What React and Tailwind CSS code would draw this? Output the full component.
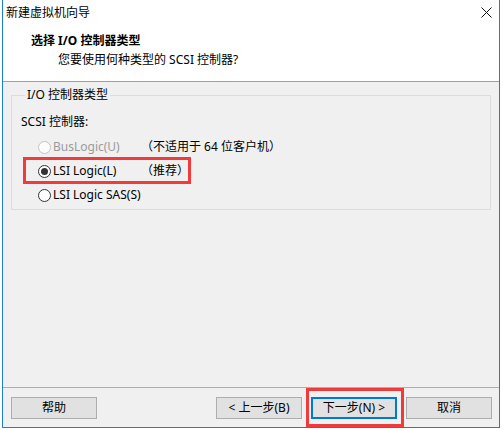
const font = { fontFamily: '"Noto Sans", "Noto Sans CJK SC", sans-serif' };

function Radio({ checked, disabled }) {
  return (
    <span
      className={
        "flex h-[13px] w-[13px] shrink-0 items-center justify-center rounded-full border " +
        (disabled ? "border-[#c4c4c4] bg-[#fcfcfc]" : "border-[#333333] bg-white")
      }
    >
      {checked && <span className="h-[7px] w-[7px] rounded-full bg-[#333333]" />}
    </span>
  );
}

function Option({ label, note, checked, disabled }) {
  return (
    <div className="flex h-[24px] items-center pl-[17px]">
      <Radio checked={checked} disabled={disabled} />
      <span className={"ml-[2px] w-[88px] " + (disabled ? "text-[#9a9a9a]" : "text-black")}>{label}</span>
      {note && <span>{note}</span>}
    </div>
  );
}

function Button({ children, primary }) {
  return (
    <button
      className={
        "flex h-[22px] w-[86px] items-center justify-center bg-[#e1e1e1] leading-[16px] text-black " +
        (primary ? "border-2 border-[#0078d7]" : "border border-[#adadad]")
      }
    >
      {children}
    </button>
  );
}

export default function App() {
  return (
    <div className="relative h-[430px] w-[503px] bg-white text-[12px] leading-[16px] text-black" style={font}>
      <div className="ml-[2px] flex h-[428px] w-[498px] flex-col border-x border-b border-[#1a7fd4] bg-white">
        {/* title bar */}
        <div className="flex h-[26px] shrink-0 items-center justify-between pl-[3px] pr-[7px]">
          <span>新建虚拟机向导</span>
          <svg width="11" height="11" viewBox="0 0 11 11" className="mt-[-1px]">
            <path d="M0.5 0.5 L10.5 10.5 M10.5 0.5 L0.5 10.5" stroke="#111" strokeWidth="1" fill="none" />
          </svg>
        </div>

        {/* header */}
        <div className="h-[55px] shrink-0 pl-[28px] pt-[7px]">
          <div className="font-bold">选择 I/O 控制器类型</div>
          <div className="ml-[27px] mt-[3px]">您要使用何种类型的 SCSI 控制器?</div>
        </div>
        <div className="h-px shrink-0 bg-[#a0a0a0]" />

        {/* body */}
        <div className="flex-1 bg-[#f0f0f0] pt-[5px]">
          <fieldset className="mx-[8px] border border-[#dcdcdc] pb-[2px] pl-[9px] pt-[11px]">
            <legend className="ml-[4px] px-[2px] leading-[16px]">I/O 控制器类型</legend>
            <div className="mb-[5px]">SCSI 控制器:</div>
            <Option label="BusLogic(U)" note="（不适用于 64 位客户机）" disabled />
            <Option label="LSI Logic(L)" note="（推荐）" checked />
            <Option label="LSI Logic SAS(S)" />
          </fieldset>
        </div>

        <div className="h-px shrink-0 bg-[#adadad]" />
        {/* footer */}
        <div className="flex h-[39px] shrink-0 items-start bg-[#f0f0f0] pl-[8px] pr-[7px] pt-[9px]">
          <Button>帮助</Button>
          <div className="ml-auto flex gap-[9px]">
            <Button>&lt; 上一步(B)</Button>
            <Button primary>下一步(N) &gt;</Button>
            <Button>取消</Button>
          </div>
        </div>
      </div>

      {/* annotations */}
      <div className="absolute left-[23px] top-[157px] h-[27px] w-[168px] border-[3px] border-[#ef3b3b]" />
      <div className="absolute left-[306px] top-[388px] h-[39px] w-[98px] border-[3px] border-[#ef3b3b]" />
    </div>
  );
}
